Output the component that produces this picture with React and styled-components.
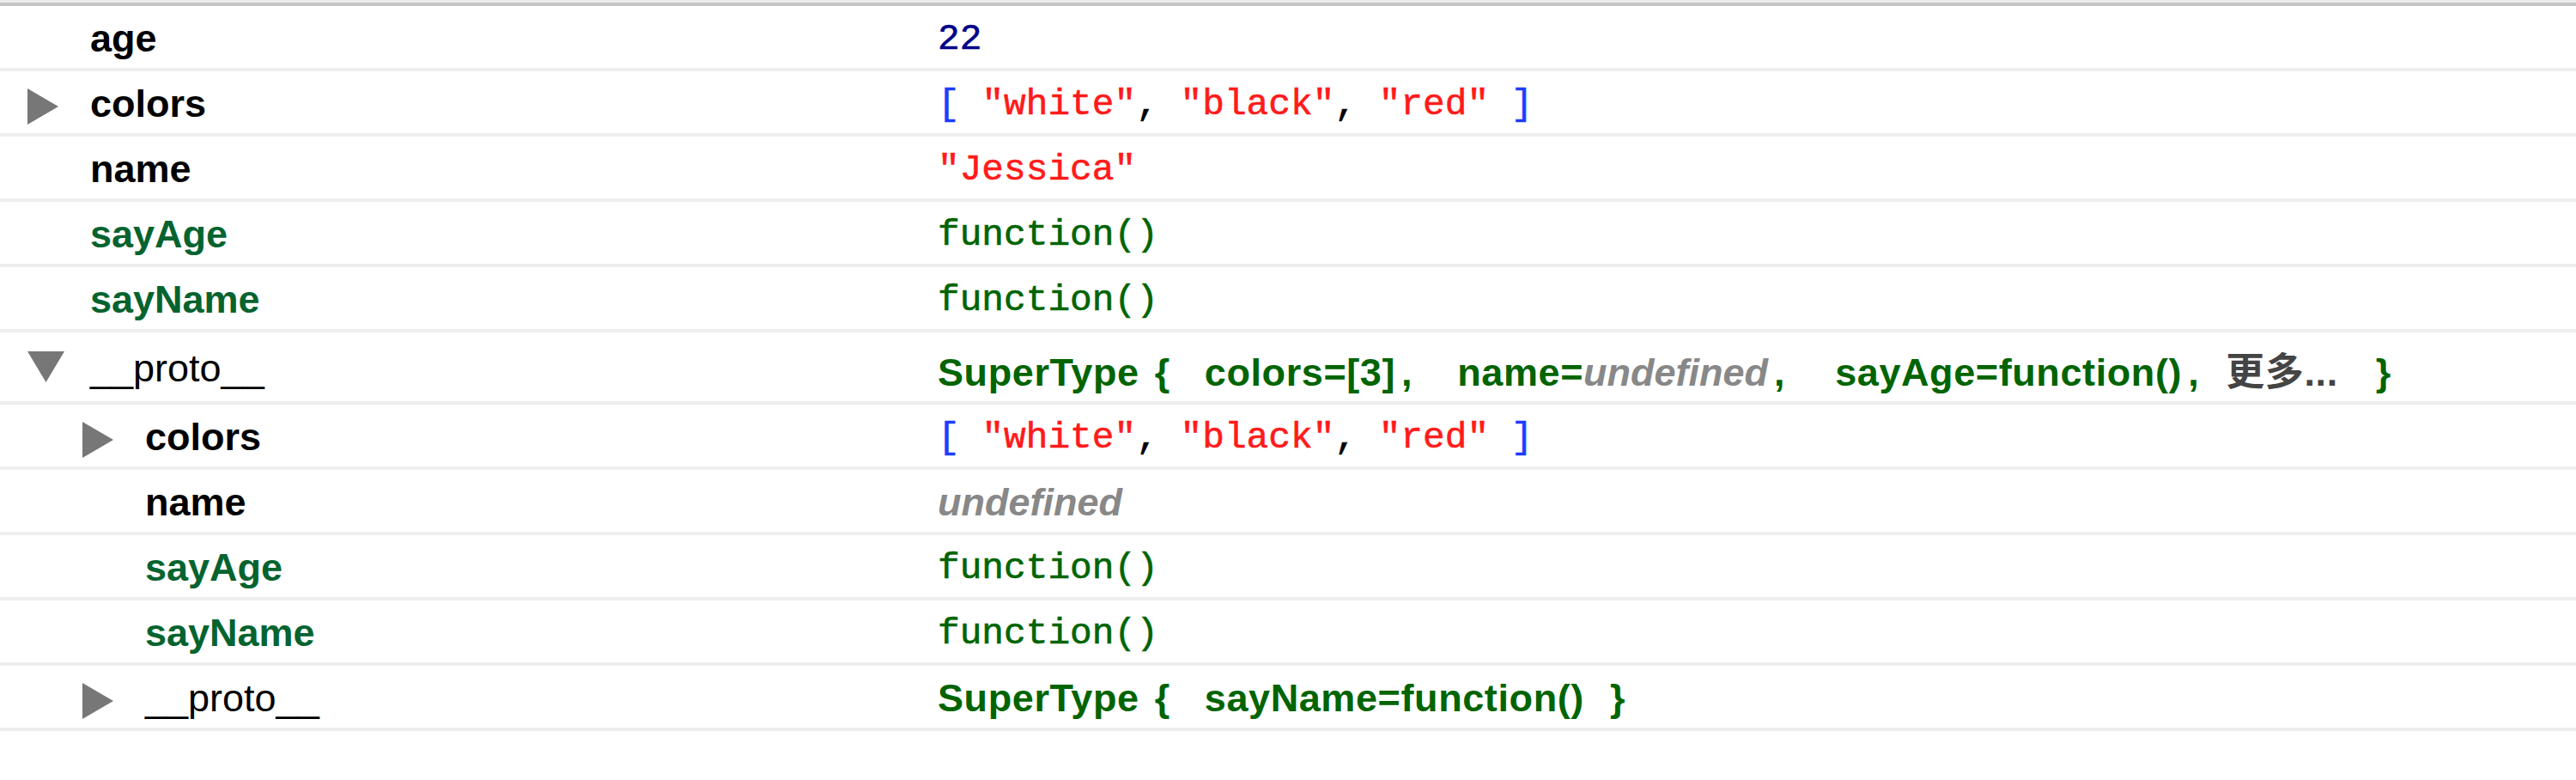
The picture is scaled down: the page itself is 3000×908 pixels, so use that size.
import React from "react";
import styled, { createGlobalStyle } from "styled-components";

const GlobalStyle = createGlobalStyle`
  html, body {
    margin: 0;
    padding: 0;
    background: #ffffff;
  }
  body {
    font-family: "Liberation Sans", Arial, sans-serif;
  }
`;

const Panel = styled.div`
  width: 3000px;
  border-top: 3px solid #ececec;
`;

const Table = styled.div`
  border-top: 4px solid #c6c6c6;
`;

const Row = styled.div`
  display: flex;
  align-items: center;
  height: ${(p) => (p.$tall ? 76 : 68)}px;
  padding-top: 4px;
  border-bottom: 4px solid #eeeeee;
  white-space: nowrap;
`;

const KeyCell = styled.div`
  flex: none;
  width: 1092px;
  box-sizing: border-box;
  display: flex;
  align-items: center;
  padding-left: ${(p) => 32 + p.$level * 64}px;
`;

const Twisty = styled.span`
  flex: none;
  width: 73px;
  display: flex;
  align-items: center;
  svg {
    display: block;
    margin-top: ${(p) => (p.$open ? -4 : 6)}px;
  }
`;

const KeyLabel = styled.span`
  font-size: 45px;
  font-weight: ${(p) => (p.$kind === "proto" ? 400 : 700)};
  color: ${(p) => (p.$kind === "func" ? "#05632f" : "#000000")};
`;

const ValueCell = styled.div`
  flex: 1;
  display: flex;
  align-items: baseline;
`;

const Mono = styled.span`
  font-family: "Liberation Mono", "Courier New", monospace;
  font-size: 42.8px;
  white-space: pre;
  -webkit-text-stroke: 0.6px currentColor;
  color: ${(p) => p.$color || "#000000"};
`;

const Undef = styled.span`
  font-size: 45px;
  font-weight: 700;
  font-style: italic;
  letter-spacing: 0;
  color: #888888;
`;

const Summary = styled.span`
  font-size: 45px;
  font-weight: 700;
  letter-spacing: 0.6px;
  color: #006400;
  display: flex;
  align-items: baseline;
`;

const Brace = styled.span`
  margin-left: ${(p) => p.$gap}px;
`;

const Prop = styled.span`
  margin-left: ${(p) => p.$gap}px;
`;

const Comma = styled.span`
  margin-left: 7px;
`;

const More = styled.span`
  margin-left: 31px;
  color: #444444;
  font-family: "Liberation Sans", "Noto Sans CJK SC", sans-serif;
`;

const Triangle = ({ open }) =>
  open ? (
    <svg width="43" height="36" viewBox="0 0 43 36">
      <polygon points="0,0 43,0 21.5,36" fill="#777777" />
    </svg>
  ) : (
    <svg width="36" height="42" viewBox="0 0 36 42">
      <polygon points="0,0 36,21 0,42" fill="#777777" />
    </svg>
  );

const ArrayValue = () => (
  <Mono>
    <Mono $color="#1f3cff">[</Mono> <Mono $color="#ff1a1a">"white"</Mono>,{" "}
    <Mono $color="#ff1a1a">"black"</Mono>, <Mono $color="#ff1a1a">"red"</Mono>{" "}
    <Mono $color="#1f3cff">]</Mono>
  </Mono>
);

const FuncValue = () => <Mono $color="#006400">function()</Mono>;

const rows = [
  { level: 0, key: "age", value: <Mono $color="#000088">22</Mono> },
  { level: 0, twisty: "closed", key: "colors", value: <ArrayValue /> },
  { level: 0, key: "name", value: <Mono $color="#ff1a1a">"Jessica"</Mono> },
  { level: 0, key: "sayAge", kind: "func", value: <FuncValue /> },
  { level: 0, key: "sayName", kind: "func", value: <FuncValue /> },
  {
    level: 0,
    twisty: "open",
    key: "__proto__",
    kind: "proto",
    tall: true,
    value: (
      <Summary>
        SuperType
        <Brace $gap={18}>{"{"}</Brace>
        <Prop $gap={40}>colors=[3]</Prop>
        <Comma>,</Comma>
        <Prop $gap={52}>
          name=<Undef>undefined</Undef>
        </Prop>
        <Comma>,</Comma>
        <Prop $gap={58}>sayAge=function()</Prop>
        <Comma>,</Comma>
        <More>更多...</More>
        <Brace $gap={44}>{"}"}</Brace>
      </Summary>
    ),
  },
  { level: 1, twisty: "closed", key: "colors", value: <ArrayValue /> },
  { level: 1, key: "name", value: <Undef>undefined</Undef> },
  { level: 1, key: "sayAge", kind: "func", value: <FuncValue /> },
  { level: 1, key: "sayName", kind: "func", value: <FuncValue /> },
  {
    level: 1,
    twisty: "closed",
    key: "__proto__",
    kind: "proto",
    value: (
      <Summary>
        SuperType
        <Brace $gap={18}>{"{"}</Brace>
        <Prop $gap={40}>sayName=function()</Prop>
        <Brace $gap={30}>{"}"}</Brace>
      </Summary>
    ),
  },
];

export default function App() {
  return (
    <>
      <GlobalStyle />
      <Panel>
        <Table>
          {rows.map((row, i) => (
            <Row key={i} $tall={row.tall}>
              <KeyCell $level={row.level}>
                <Twisty $open={row.twisty === "open"}>
                  {row.twisty && <Triangle open={row.twisty === "open"} />}
                </Twisty>
                <KeyLabel $kind={row.kind}>{row.key}</KeyLabel>
              </KeyCell>
              <ValueCell>{row.value}</ValueCell>
            </Row>
          ))}
        </Table>
      </Panel>
    </>
  );
}
